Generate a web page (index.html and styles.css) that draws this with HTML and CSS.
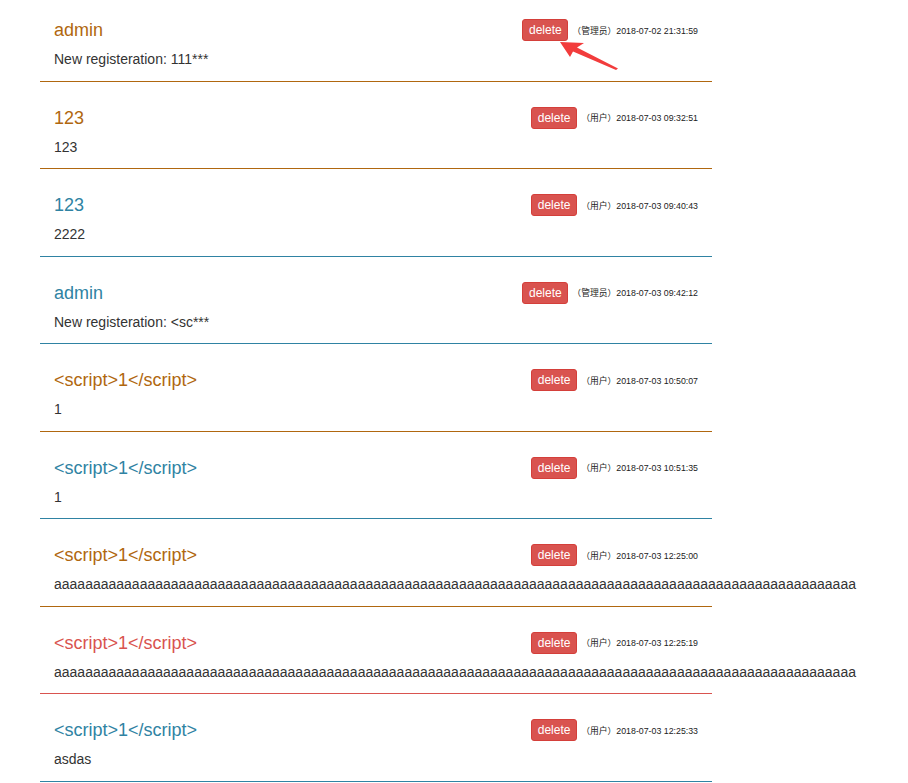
FILE: index.html
```html
<!DOCTYPE html>
<html>
<head>
<meta charset="utf-8">
<link rel="stylesheet" href="styles.css">
</head>
<body>
<div class="list">
  <div class="item c-brown">
    <div class="head"><span class="name">admin</span><span class="meta"><button class="del">delete</button><span class="time">（管理员）2018-07-02 21:31:59</span></span></div>
    <div class="body">New registeration: 111***</div>
  </div>
  <div class="item c-brown">
    <div class="head"><span class="name">123</span><span class="meta"><button class="del">delete</button><span class="time">（用户）2018-07-03 09:32:51</span></span></div>
    <div class="body">123</div>
  </div>
  <div class="item c-blue">
    <div class="head"><span class="name">123</span><span class="meta"><button class="del">delete</button><span class="time">（用户）2018-07-03 09:40:43</span></span></div>
    <div class="body">2222</div>
  </div>
  <div class="item c-blue">
    <div class="head"><span class="name">admin</span><span class="meta"><button class="del">delete</button><span class="time">（管理员）2018-07-03 09:42:12</span></span></div>
    <div class="body">New registeration: &lt;sc***</div>
  </div>
  <div class="item c-brown">
    <div class="head"><span class="name">&lt;script&gt;1&lt;/script&gt;</span><span class="meta"><button class="del">delete</button><span class="time">（用户）2018-07-03 10:50:07</span></span></div>
    <div class="body">1</div>
  </div>
  <div class="item c-blue">
    <div class="head"><span class="name">&lt;script&gt;1&lt;/script&gt;</span><span class="meta"><button class="del">delete</button><span class="time">（用户）2018-07-03 10:51:35</span></span></div>
    <div class="body">1</div>
  </div>
  <div class="item c-brown">
    <div class="head"><span class="name">&lt;script&gt;1&lt;/script&gt;</span><span class="meta"><button class="del">delete</button><span class="time">（用户）2018-07-03 12:25:00</span></span></div>
    <div class="body">aaaaaaaaaaaaaaaaaaaaaaaaaaaaaaaaaaaaaaaaaaaaaaaaaaaaaaaaaaaaaaaaaaaaaaaaaaaaaaaaaaaaaaaaaaaaaaaaaaaaaaa</div>
  </div>
  <div class="item c-red">
    <div class="head"><span class="name">&lt;script&gt;1&lt;/script&gt;</span><span class="meta"><button class="del">delete</button><span class="time">（用户）2018-07-03 12:25:19</span></span></div>
    <div class="body">aaaaaaaaaaaaaaaaaaaaaaaaaaaaaaaaaaaaaaaaaaaaaaaaaaaaaaaaaaaaaaaaaaaaaaaaaaaaaaaaaaaaaaaaaaaaaaaaaaaaaaa</div>
  </div>
  <div class="item c-blue">
    <div class="head"><span class="name">&lt;script&gt;1&lt;/script&gt;</span><span class="meta"><button class="del">delete</button><span class="time">（用户）2018-07-03 12:25:33</span></span></div>
    <div class="body">asdas</div>
  </div>
</div>
<svg class="arrow" width="70" height="40" viewBox="555 38 70 40">
  <polygon points="560,42 584,43 577,47.5 618,68.5 616,70 573,51.5 570,57" fill="#f23c3c"/>
</svg>
</body>
</html>
```
FILE: styles.css
```css
html, body {
  margin: 0;
  padding: 0;
  background: #fff;
  font-family: "Liberation Sans", Arial, "Noto Sans CJK SC", sans-serif;
  color: #333;
  overflow: hidden;
}
body {
  position: relative;
  height: 783px;
}
.list {
  margin: -6px 0 0 40px;
  width: 672px;
}
.item {
  padding: 22px 14px 10.5px 14px;
  border-bottom: 1px solid;
  box-sizing: border-box;
  height: 87.5px;
}
.c-brown { border-bottom-color: #b0670f; }
.c-brown .name { color: #b0670f; }
.c-blue { border-bottom-color: #2f83a3; }
.c-blue .name { color: #2f83a3; }
.c-red { border-bottom-color: #d9534f; }
.c-red .name { color: #d9534f; }
.head {
  display: flex;
  align-items: center;
  justify-content: space-between;
  height: 28px;
}
.name {
  font-size: 18px;
  line-height: 20px;
  white-space: nowrap;
}
.meta {
  display: flex;
  align-items: center;
  gap: 4px;
}
.del {
  background: #d9534f;
  color: #fff;
  border: 1px solid #d43f3a;
  border-radius: 3px;
  font-family: "Liberation Sans", Arial, sans-serif;
  font-size: 12px;
  height: 22px;
  width: 46px;
  padding: 0;
  line-height: 20px;
}
.time {
  font-size: 8.8px;
  color: #222;
  white-space: nowrap;
  font-family: "Liberation Sans", Arial, "Noto Sans CJK SC", sans-serif;
}
.body {
  margin-top: 5px;
  font-size: 14px;
  line-height: 20px;
  white-space: nowrap;
}
.arrow {
  position: absolute;
  left: 555px;
  top: 38px;
}
```
